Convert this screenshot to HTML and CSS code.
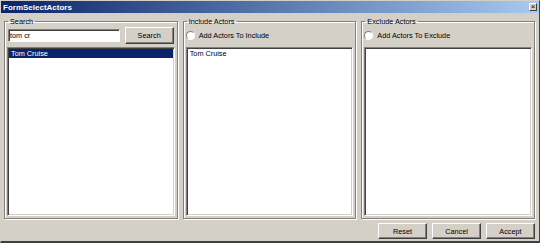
FILE: index.html
```html
<!DOCTYPE html>
<html lang="en">
<head>
    <meta charset="UTF-8" />
    <title>FormSelectActors</title>
    <link rel="stylesheet" href="styles.css">
</head>
<body>
    <div class="window">
        <div class="titlebar">
            <span class="title">FormSelectActors</span>
            <span class="close">&times;</span>
        </div>

        <div class="groups">
            <fieldset class="group">
                <legend>Search</legend>
                <div class="row">
                    <input type="text" class="textbox" value="tom cr" />
                    <button class="btn search-btn">Search</button>
                </div>
                <ul class="listbox">
                    <li class="selected">Tom Cruise</li>
                </ul>
            </fieldset>

            <fieldset class="group">
                <legend>Include Actors</legend>
                <label class="row radio-row">
                    <span class="radio"></span>
                    Add Actors To Include
                </label>
                <ul class="listbox">
                    <li>Tom Cruise</li>
                </ul>
            </fieldset>

            <fieldset class="group">
                <legend>Exclude Actors</legend>
                <label class="row radio-row">
                    <span class="radio"></span>
                    Add Actors To Exclude
                </label>
                <ul class="listbox"></ul>
            </fieldset>
        </div>

        <div class="footer">
            <button class="btn">Reset</button>
            <button class="btn">Cancel</button>
            <button class="btn">Accept</button>
        </div>
    </div>
</body>
</html>
```

FILE: styles.css
```css
* { box-sizing: border-box; }
body { margin: 0; font-family: "Liberation Sans", Arial, sans-serif; font-size: 7.3px; color: #000; }

.window { width: 540px; height: 243px; background: #d4d0c8; display: flex; flex-direction: column;
    border-top: 1px solid #d4d0c8; border-left: 1px solid #d4d0c8;
    border-right: 1px solid #404040; border-bottom: 2px solid #404040; }

.titlebar { height: 12px; display: flex; align-items: center; justify-content: space-between;
    padding: 0 2px 0 2px; background: linear-gradient(to right, #0a246a, #a6caf0); }
.title { color: #fff; font-weight: bold; font-size: 8px; }
.close { width: 8px; height: 8px; background: #d4d0c8; font-size: 8px; line-height: 6px; text-align: center;
    border-top: 1px solid #fff; border-left: 1px solid #fff; border-right: 1px solid #404040; border-bottom: 1px solid #404040; }

.groups { display: flex; gap: 5px; padding: 4px 4px 0 3px; }
.group { margin: 0; width: 174px; height: 202px; padding: 0 2px 2px 2px; display: flex; flex-direction: column;
    border: 1px solid #808080; box-shadow: inset 1px 1px 0 #fff, 1px 1px 0 #fff; }
.group legend { padding: 0 2px; margin-left: 1px; line-height: 9px; }

.row { height: 18px; display: flex; align-items: center; gap: 5px; padding-left: 1px; }
.radio-row { gap: 4px; padding-left: 0; }

.textbox { flex: 1; height: 13px; padding: 0 1px; font: inherit; background: #fff;
    border-top: 1px solid #808080; border-left: 1px solid #808080; border-right: 1px solid #fff; border-bottom: 1px solid #fff;
    box-shadow: inset 1px 1px 0 #404040; outline: none; }

.btn { width: 49px; height: 16px; padding: 0; font: inherit; background: #d4d0c8;
    border-top: 1px solid #fff; border-left: 1px solid #fff; border-right: 1px solid #404040; border-bottom: 1px solid #404040;
    box-shadow: inset -1px -1px 0 #808080; }
.search-btn { height: 17px; margin-right: 1px; }

.radio { width: 9px; height: 9px; border-radius: 50%; background: #fff;
    border: 1px solid; border-color: #808080 #fff #fff #808080; }

.listbox { flex: 1; margin: 3px 0 0 0; padding: 1px; list-style: none; background: #fff;
    border-top: 1px solid #808080; border-left: 1px solid #808080; border-right: 1px solid #fff; border-bottom: 1px solid #fff;
    box-shadow: inset 1px 1px 0 #404040, inset -1px -1px 0 #d4d0c8; }
.listbox li { height: 9px; line-height: 9px; padding-left: 2px; }
.listbox li.selected { background: #0a246a; color: #fff; }

.footer { display: flex; justify-content: flex-end; gap: 5px; padding: 4px 4px 0 0; }
```
